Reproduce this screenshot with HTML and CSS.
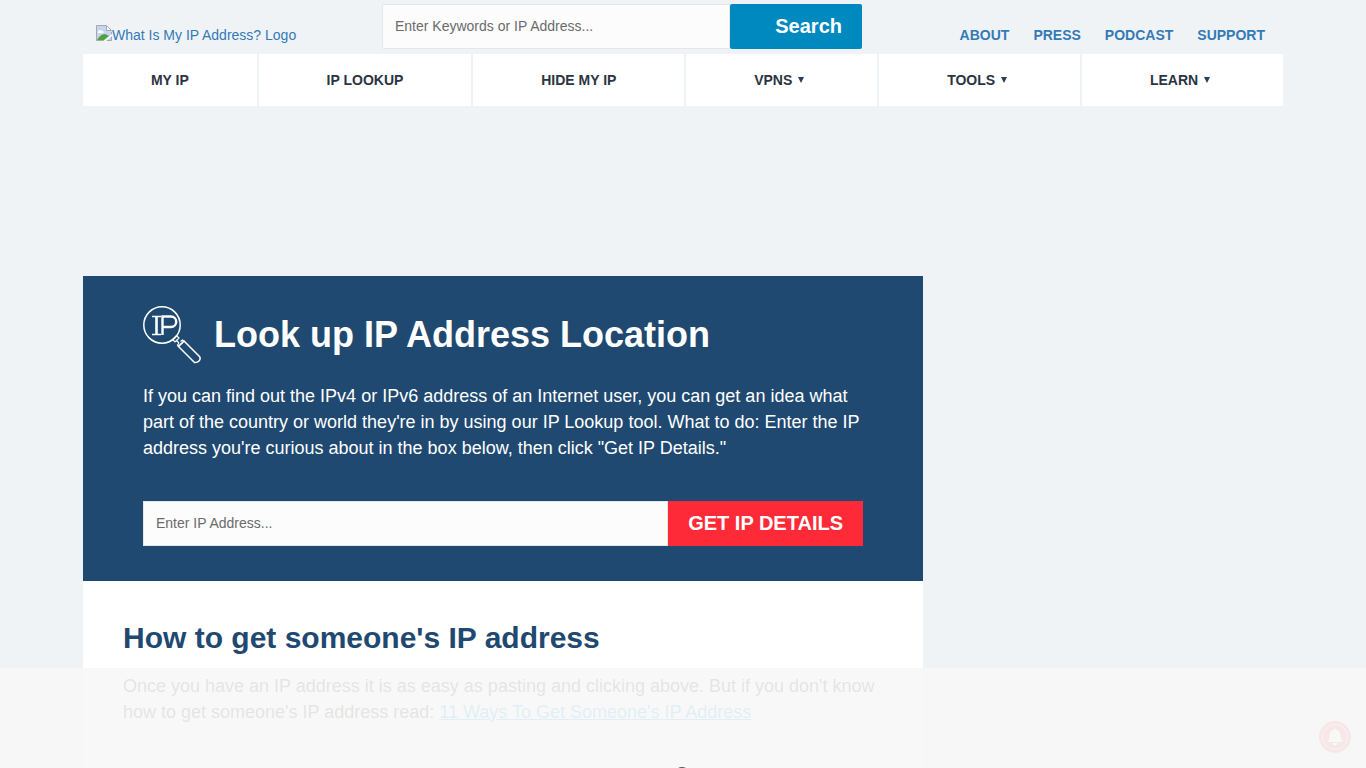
FILE: index.html
```html
<!DOCTYPE html>
<html lang="en">
<head>
<meta charset="utf-8">
<meta name="viewport" content="width=device-width, initial-scale=1">
<title>Look up IP Address Location</title>
<link rel="stylesheet" href="styles.css">
</head>
<body>
<div class="container">
  <header class="header">
    <a class="logo" href="#">
      <svg class="logo-icon" width="16" height="16" viewBox="0 0 16 16" aria-hidden="true">
        <path d="M.5 .5h10l5 5v10H.5z" fill="#c6d5f3"/>
        <path d="M2 7c0-2 3-3 4-1 2 0 2 2 1 2H2z" fill="#fff"/>
        <path d="M1 15c2-4 5-6 8-6l4 2-5 4z" fill="#4fa33c"/>
        <path d="M15.500 7v8.500H.5V.5H10" fill="none" stroke="#a5a9ad"/>
        <path d="M10.500 .5v5h5z" fill="#fff" stroke="#a5a9ad"/>
        <path d="M16 9v2L10 16H7.500z" fill="#fff"/>
      </svg>
      <span>What Is My IP Address? Logo</span>
    </a>
    <form class="search">
      <input class="field" type="text" aria-label="Search" placeholder="Enter Keywords or IP Address...">
      <button class="search-button" type="button">Search</button>
    </form>
    <nav class="top-links" aria-label="Site">
      <a href="#">ABOUT</a>
      <a href="#">PRESS</a>
      <a href="#">PODCAST</a>
      <a href="#">SUPPORT</a>
    </nav>
  </header>

  <nav class="main-nav" aria-label="Main">
    <a href="#">MY IP</a>
    <a href="#">IP LOOKUP</a>
    <a href="#">HIDE MY IP</a>
    <a class="has-menu" href="#">VPNS <span class="caret"></span></a>
    <a class="has-menu" href="#">TOOLS <span class="caret"></span></a>
    <a class="has-menu" href="#">LEARN <span class="caret"></span></a>
  </nav>

  <main class="content">
    <section class="lookup">
      <div class="lookup-title">
        <svg width="58" height="58" viewBox="0 0 58 58" fill="none" stroke="#fff" stroke-width="1.500" aria-hidden="true">
          <circle cx="19" cy="19" r="18.200"/>
          <path d="M9 10.500h9M9 28.500h9" stroke-width="1.600"/>
          <path d="M13.500 10.500v18" stroke-width="2.600"/>
          <path d="M19.500 29V10.500h8.500a5 5 0 0 1 0 10.500h-8" stroke-width="2.400"/>
          <path d="M29.500 33.500l4-4 2.500 2.500-4 4zM33.500 34.500l2.500 2.500M36 37l-1.500 2 1 1.500 5.500-5.500-1.500-1-2 1.500" stroke-width="1.200"/>
          <path d="M35.500 40.500l5.500-5.500L56.500 50.500q1.500 2.500-.5 4.500t-4.500 1.500z" stroke-linejoin="round"/>
        </svg>
        <h1>Look up IP Address Location</h1>
      </div>
      <p>If you can find out the IPv4 or IPv6 address of an Internet user, you can get an idea what part of the country or world they're in by using our IP Lookup tool. What to do: Enter the IP address you're curious about in the box below, then click "Get IP Details."</p>
      <form class="lookup-form">
        <input class="field" type="text" aria-label="IP address" placeholder="Enter IP Address...">
        <button class="details-button" type="button">GET IP DETAILS</button>
      </form>
    </section>
    <section class="article">
      <h2>How to get someone's IP address</h2>
      <p>Once you have an IP address it is as easy as pasting and clicking above. But if you don't know how to get someone's IP address read: <a href="#">11 Ways To Get Someone's IP Address</a></p>
    </section>
  </main>
</div>

<button class="bell" type="button" aria-label="Notifications">
  <svg width="32" height="32" viewBox="0 0 32 32" aria-hidden="true">
    <circle cx="16" cy="16" r="16" fill="#f2555a"/>
    <circle cx="16" cy="16" r="12.500" fill="none" stroke="#fff" stroke-opacity=".6"/>
    <path d="M16 7.500a1.500 1.500 0 0 1 1.500 1.500c3 .8 4 3 4 6 0 3 1 4.500 2.500 6H8c1.500-1.500 2.500-3 2.500-6 0-3 1-5.200 4-6A1.500 1.500 0 0 1 16 7.500zM13.500 22h5a2.500 2.500 0 0 1-5 0z" fill="#fff"/>
  </svg>
</button>
<div class="bottom-bar"><span class="spinner"></span></div>
</body>
</html>
```
FILE: styles.css
```css
* { box-sizing: border-box; }

body {
  margin: 0;
  height: 100vh;
  overflow: hidden;
  background: #f0f3f6;
  color: #333;
  font: 14px/20px "Liberation Sans", Arial, sans-serif;
}

a { color: #337ab7; text-decoration: none; }
h1, h2, p { margin: 0; }

.container { max-width: 1200px; margin: 0 auto; }

.header {
  display: flex;
  align-items: flex-end;
  padding: 4px 18px 5px 13px;
}

.logo {
  display: flex;
  flex: 0 0 286px;
  padding-bottom: 4px;
}

.logo-icon { flex: none; }

.search { display: flex; flex: 0 1 480px; }

.field {
  flex: 1;
  min-width: 0;
  height: 45px;
  padding: 0 12px 2px;
  border: 1px solid #e6e6e6;
  border-radius: 2px 0 0 2px;
  background: #fcfcfc;
  color: #333;
  font: inherit;
}

.field::placeholder { color: #6b6b6b; opacity: 1; }

.search-button {
  padding: 0 20px 2px 45px;
  border: 0;
  border-radius: 2px;
  background: #0089bf;
  color: #fff;
  font: bold 20px/24px "Liberation Sans", Arial, sans-serif;
}

.top-links {
  display: flex;
  gap: 24px;
  margin-left: auto;
  padding-bottom: 4px;
  font-weight: bold;
}

.main-nav { display: flex; gap: 2px; }

.main-nav a {
  display: flex;
  flex: 1 1 auto;
  align-items: center;
  justify-content: center;
  gap: 6px;
  padding: 16px 67px;
  background: #fff;
  color: #2b3442;
  font-weight: bold;
  white-space: nowrap;
}

.main-nav .has-menu { padding-right: 72px; }

.caret {
  border: 3px solid transparent;
  border-top: 6px solid #2b3e5b;
  border-bottom: 0;
}

.content { max-width: 840px; margin-top: 170px; }

.lookup {
  padding: 30px 60px 35px;
  background: #1f4970;
  color: #fff;
}

.lookup-title { display: flex; align-items: center; gap: 13px; }

h1 { font-size: 36px; line-height: 40px; }

.lookup p, .article p { font-size: 18px; line-height: 26px; }

.lookup p { margin: 19px 0 40px; }

.lookup-form { display: flex; }
.lookup-form .field { border-radius: 0; }

.details-button {
  padding: 0 20px 2px;
  border: 0;
  background: #ff2a38;
  color: #fff;
  font: bold 20px/24px "Liberation Sans", Arial, sans-serif;
}

.article { padding: 40px 40px 80px; background: #fff; }

h2 {
  margin-bottom: 19px;
  color: #1f4970;
  font-size: 30px;
  line-height: 33px;
}

.article p a { color: #00a0df; text-decoration: underline; }

.bottom-bar {
  position: fixed;
  right: 0;
  bottom: 0;
  left: 0;
  height: 100px;
  overflow: hidden;
  background: rgba(247, 247, 247, .9);
}

.spinner {
  position: absolute;
  top: 99px;
  left: calc(50% - 9px);
  width: 16px;
  height: 16px;
  border: 2px solid #555;
  border-radius: 50%;
}

.bell {
  position: fixed;
  right: 15px;
  bottom: 15px;
  width: 32px;
  height: 32px;
  padding: 0;
  border: 0;
  border-radius: 50%;
  background: none;
}
```
